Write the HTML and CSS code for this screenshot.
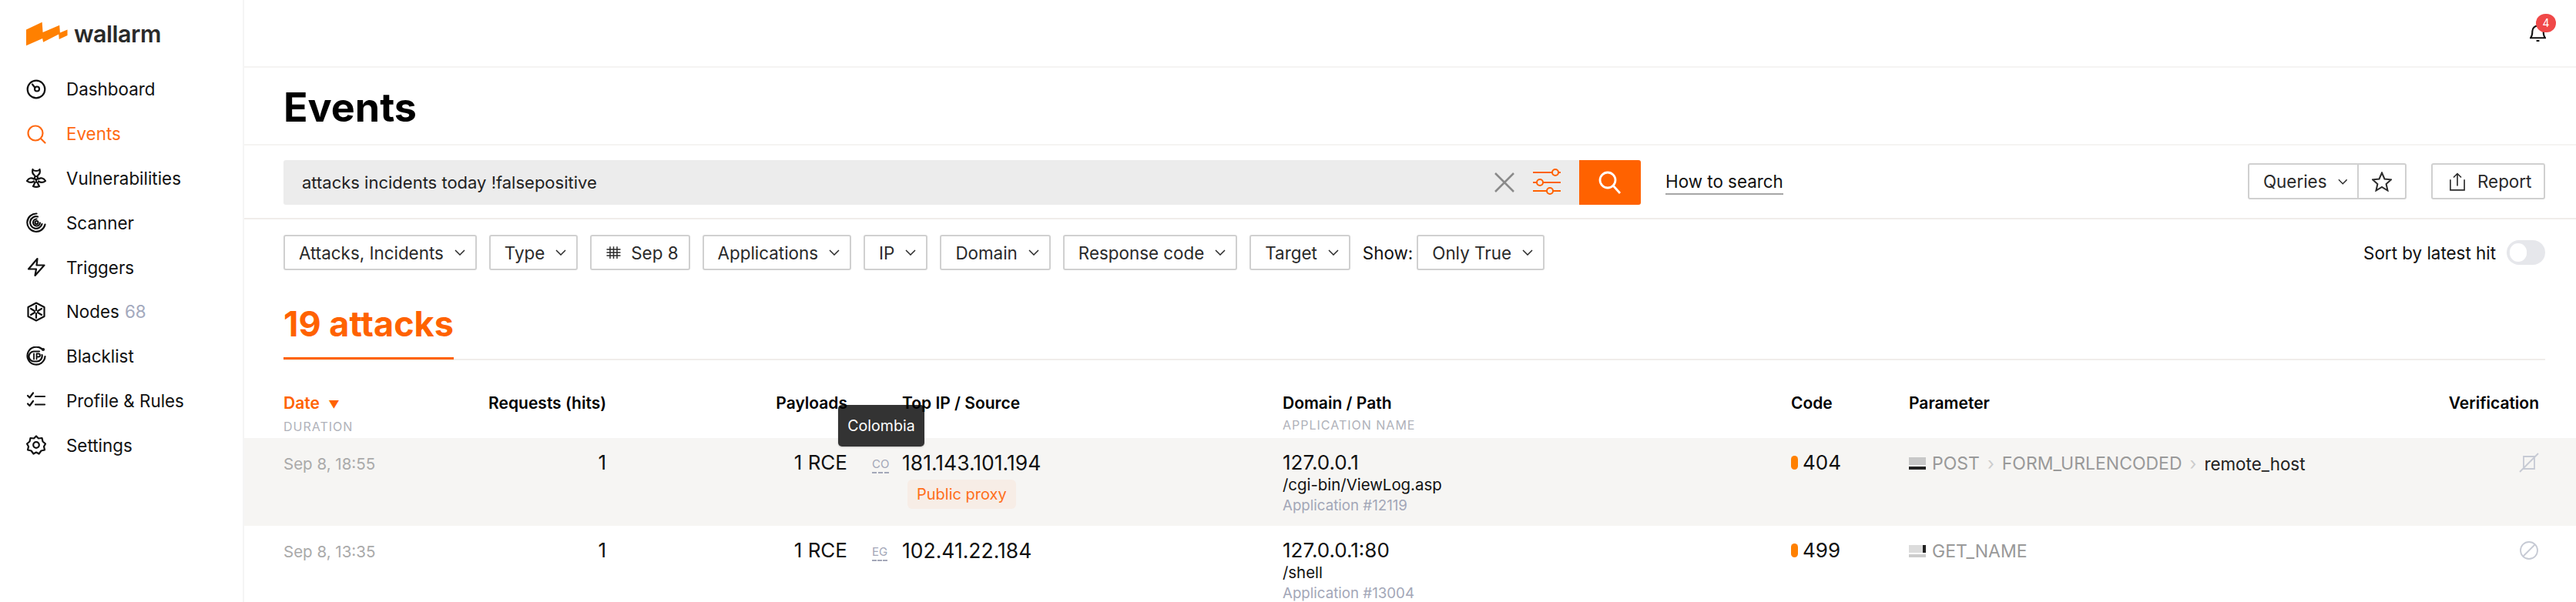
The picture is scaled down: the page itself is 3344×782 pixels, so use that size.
FILE: index.html
```html
<!DOCTYPE html>
<html lang="en">
<head>
  <meta charset="UTF-8">
  <meta name="viewport" content="width=device-width, initial-scale=1.0">
  <title>Wallarm - Events</title>
  <link rel="stylesheet" href="styles.css">
</head>
<body>
<div class="app">
  <aside class="sidebar">
    <div class="logo">
      <svg class="logo-mark" viewBox="0 0 56 32"><path d="M0 10.500 21 0.500 22 14 44 4.500 44.700 14.500 54.500 10.500 54.500 18 43.500 23 43 16.500 22.500 27 21.500 22 0 31.500Z" fill="#ff8000"/></svg>
      <span class="logo-text">wallarm</span>
    </div>
    <nav class="nav">
      <a class="nav-item">
        <svg class="nav-icon" viewBox="0 0 26 26"><circle cx="13" cy="13" r="11.300"/><circle cx="14" cy="12.500" r="3"/><path d="M11.500 11 8 6.500"/></svg>
        <span>Dashboard</span>
      </a>
      <a class="nav-item active">
        <svg class="nav-icon" viewBox="0 0 26 26"><circle cx="12" cy="12" r="9.500"/><path d="M19 19 24.500 24.500"/></svg>
        <span>Events</span>
      </a>
      <a class="nav-item">
        <svg class="nav-icon" viewBox="0 0 26 26"><circle cx="13" cy="13" r="2"/><path d="M8.500 2C7.500 5 8.500 8 11 10M17.500 2C18.500 5 17.500 8 15 10M8.500 2.500C10.500 4.500 15.500 4.500 17.500 2.500"/><path d="M1 17C3.500 13 7 12.500 10 14.500M25 17C22.500 13 19 12.500 16 14.500M1 17C4 19.500 7 19.500 10 17.500M25 17C22 19.500 19 19.500 16 17.500M13 16V19M9 24C11.500 25 14.500 25 17 24M9 24C10 22 11 21 11 19M17 24C16 22 15 21 15 19"/></svg>
        <span>Vulnerabilities</span>
      </a>
      <a class="nav-item">
        <svg class="nav-icon" viewBox="0 0 26 26"><circle cx="13.500" cy="13" r="2"/><path d="M24.500 15.500A11.700 11.700 0 1 1 13.500 1.500M20.500 15A7.800 7.800 0 1 1 15 5.500M18 13.500A4.500 4.500 0 1 1 13.500 8.500"/></svg>
        <span>Scanner</span>
      </a>
      <a class="nav-item">
        <svg class="nav-icon" viewBox="0 0 26 26"><path d="M14.500 2 3 15.500H13L11.500 24 23.500 10.500H13.500Z"/></svg>
        <span>Triggers</span>
      </a>
      <a class="nav-item">
        <svg class="nav-icon" viewBox="0 0 26 26"><path d="M13 1.500 23.500 7V19L13 24.500 2.500 19V7ZM13 5V11M13 15V21M6 9 11 12M15 14 20 17M20 9 15 12M11 14 6 17"/></svg>
        <span>Nodes</span><span class="nav-count">68</span>
      </a>
      <a class="nav-item">
        <svg class="nav-icon" viewBox="0 0 26 26"><path d="M20 3A11.500 11.500 0 1 0 24.500 13M17 6.500H10A6.500 6.500 0 0 0 10 19.500H14A7 7 0 0 0 20.500 11"/><path class="thin" d="M10 9.500V16.500M13.500 16.500V9.500H16A2 2 0 0 1 16 13.500H13.500"/><circle class="thin" cx="22" cy="4" r="1.200"/></svg>
        <span>Blacklist</span>
      </a>
      <a class="nav-item">
        <svg class="nav-icon" viewBox="0 0 26 26"><path d="M2 7 4.500 9.500 9 3.500M2 17.500 4.500 20 9 14M12 8H24M12 18.500H24"/></svg>
        <span>Profile &amp; Rules</span>
      </a>
      <a class="nav-item">
        <svg class="nav-icon" viewBox="0 0 26 26"><circle cx="13" cy="13" r="3.800"/><path d="M13 1.500 16 4.500 20.500 4 21.500 8.500 25 11.500 23 15 24 19.500 19.500 20.500 16.500 24.500 13 22.500 9.500 24.500 6.500 20.500 2 19.500 3 15 1 11.500 4.500 8.500 5.500 4 10 4.500Z"/></svg>
        <span>Settings</span>
      </a>
    </nav>
  </aside>

  <main class="main">
    <header class="topbar">
      <div class="bell">
        <svg class="bell-icon" viewBox="0 0 22 26"><path d="M1 19.500H21C18.500 17 18.500 14 18.500 10.500A7.500 7.500 0 0 0 3.500 10.500C3.500 14 3.500 17 1 19.500ZM9 23.500H13"/></svg>
        <span class="badge">4</span>
      </div>
    </header>

    <div class="title-row">
      <h1>Events</h1>
    </div>

    <div class="search-row">
      <div class="search">
        <span class="search-text">attacks incidents today !falsepositive</span>
        <svg class="search-clear" viewBox="0 0 26 26"><path d="M1 1 25 25M25 1 1 25"/></svg>
        <svg class="search-tune" viewBox="0 0 36 36"><path d="M0 5H25M33 5H36M0 18H5M13 18H36M0 29H18M26 29H36"/><circle cx="29" cy="5" r="4"/><circle cx="9" cy="18" r="4"/><circle cx="22" cy="29" r="4"/></svg>
        <button class="search-btn">
          <svg viewBox="0 0 30 30"><circle cx="12" cy="12" r="10"/><path d="M19 19 28 29"/></svg>
        </button>
      </div>
      <a class="how-to">How to search</a>
      <div class="search-actions">
        <div class="btn-group">
          <button class="btn queries">Queries <svg class="chev" viewBox="0 0 14 8"><path d="M1 1 7 7 13 1"/></svg></button>
          <button class="btn star">
            <svg viewBox="0 0 26 26"><path d="M13 1.500 16.500 9.500 25 10.300 18.600 16 20.500 24.500 13 20 5.500 24.500 7.400 16 1 10.300 9.500 9.500Z"/></svg>
          </button>
        </div>
        <button class="btn report">
          <svg viewBox="0 0 22 26"><path d="M1 10V25H21V10M11 19V2M5.500 7 11 1.500 16.500 7"/></svg>
          Report
        </button>
      </div>
    </div>

    <div class="filters">
      <button class="btn filter">Attacks, Incidents <svg class="chev" viewBox="0 0 14 8"><path d="M1 1 7 7 13 1"/></svg></button>
      <button class="btn filter">Type <svg class="chev" viewBox="0 0 14 8"><path d="M1 1 7 7 13 1"/></svg></button>
      <button class="btn filter">
        <svg class="cal" viewBox="0 0 18 16"><path d="M1 4.500H17M1 8H17M1 11.500H17M5 1V15M9 1V15M13 1V15"/></svg>
        Sep 8
      </button>
      <button class="btn filter">Applications <svg class="chev" viewBox="0 0 14 8"><path d="M1 1 7 7 13 1"/></svg></button>
      <button class="btn filter">IP <svg class="chev" viewBox="0 0 14 8"><path d="M1 1 7 7 13 1"/></svg></button>
      <button class="btn filter">Domain <svg class="chev" viewBox="0 0 14 8"><path d="M1 1 7 7 13 1"/></svg></button>
      <button class="btn filter">Response code <svg class="chev" viewBox="0 0 14 8"><path d="M1 1 7 7 13 1"/></svg></button>
      <button class="btn filter">Target <svg class="chev" viewBox="0 0 14 8"><path d="M1 1 7 7 13 1"/></svg></button>
      <div class="show">
        <span>Show:</span>
        <button class="btn filter">Only True <svg class="chev" viewBox="0 0 14 8"><path d="M1 1 7 7 13 1"/></svg></button>
      </div>
      <div class="sort">
        <span>Sort by latest hit</span>
        <span class="toggle"><span class="toggle-knob"></span></span>
      </div>
    </div>

    <div class="tabs">
      <div class="tab">19 attacks</div>
    </div>

    <div class="table">
      <div class="row head">
        <div>
          <div class="th sorted">Date <span class="sort-arrow">▼</span></div>
          <div class="th-sub">DURATION</div>
        </div>
        <div class="th right">Requests (hits)</div>
        <div class="th right">Payloads</div>
        <div></div>
        <div class="th">Top IP / Source</div>
        <div>
          <div class="th">Domain / Path</div>
          <div class="th-sub">APPLICATION NAME</div>
        </div>
        <div class="th">Code</div>
        <div class="th">Parameter</div>
        <div class="th right">Verification</div>
      </div>

      <div class="row event hovered">
        <div class="date">Sep 8, 18:55</div>
        <div class="num">1</div>
        <div class="num">1 RCE</div>
        <div class="flag">
          <span class="country">CO</span>
          <div class="tooltip">Colombia</div>
        </div>
        <div>
          <div class="ip">181.143.101.194</div>
          <span class="tag">Public proxy</span>
        </div>
        <div>
          <div class="domain">127.0.0.1</div>
          <div class="path">/cgi-bin/ViewLog.asp</div>
          <div class="app-name">Application #12119</div>
        </div>
        <div class="code"><span class="code-dot"></span>404</div>
        <div class="param">
          <span class="sig"><i class="sig-a"></i><i class="sig-b"></i></span>
          <span>POST</span><span class="sep">›</span><span>FORM_URLENCODED</span><span class="sep">›</span><span class="param-name">remote_host</span>
        </div>
        <div class="verify">
          <svg viewBox="0 0 26 26"><path d="M6 5H20V21H6ZM25 1 1 25"/></svg>
        </div>
      </div>

      <div class="row event">
        <div class="date">Sep 8, 13:35</div>
        <div class="num">1</div>
        <div class="num">1 RCE</div>
        <div class="flag"><span class="country">EG</span></div>
        <div>
          <div class="ip">102.41.22.184</div>
        </div>
        <div>
          <div class="domain">127.0.0.1:80</div>
          <div class="path">/shell</div>
          <div class="app-name">Application #13004</div>
        </div>
        <div class="code"><span class="code-dot"></span>499</div>
        <div class="param">
          <span class="sig sig-get"><i class="sig-c"></i><i class="sig-d"></i></span>
          <span>GET_NAME</span>
        </div>
        <div class="verify">
          <svg viewBox="0 0 26 26"><circle cx="13" cy="13" r="11"/><path d="M5 21 21 5"/></svg>
        </div>
      </div>
    </div>
  </main>
</div>
</body>
</html>
```

FILE: styles.css
```css
* {
  box-sizing: border-box;
}

html, body {
  margin: 0;
  height: 782px;
  overflow: hidden;
  background: #fff;
}

body {
  font-family: Inter, "Liberation Sans", sans-serif;
  font-size: 22.4px;
  color: #111;
}

svg {
  fill: none;
  stroke: currentColor;
  display: block;
}

.app {
  display: flex;
  height: 782px;
}

/* sidebar */
.sidebar {
  width: 317px;
  flex-shrink: 0;
  border-right: 2px solid #f5f5f5;
}

.logo {
  height: 87px;
  display: flex;
  align-items: center;
  padding: 0 0 0 34px;
  gap: 7px;
}

.logo-mark {
  width: 55px;
  height: 32px;
  stroke: none;
}

.logo-text {
  font-size: 30.500px;
  font-weight: 600;
  color: #2a2a2a;
  letter-spacing: -0.5px;
}

.nav-item {
  height: 57.800px;
  display: flex;
  align-items: center;
  padding-left: 34px;
  color: #111;
}

.nav-item.active {
  color: #ff6a13;
}

.nav-icon {
  width: 26px;
  height: 26px;
  margin-right: 26px;
  stroke-width: 2.200;
  stroke-linecap: round;
  stroke-linejoin: round;
}

.nav-icon .thin {
  stroke-width: 1.800;
}

.nav-count {
  color: #a3a9bd;
  margin-left: 7px;
}

/* top */
.main {
  flex: 1;
  min-width: 0;
}

.topbar {
  height: 88px;
  border-bottom: 2px solid #f5f4f2;
  display: flex;
  justify-content: flex-end;
  padding: 18px 26px 0 0;
}

.bell {
  position: relative;
  width: 26px;
  height: 42px;
}

.bell-icon {
  width: 21px;
  height: 26px;
  margin: 12px 0 0 -8px;
  stroke-width: 2.200;
  color: #111;
}

.badge {
  position: absolute;
  top: 0;
  left: 0;
  width: 26px;
  height: 24px;
  border-radius: 13px;
  background: #f04848;
  color: #fff;
  font-size: 14px;
  line-height: 24px;
  text-align: center;
}

.title-row {
  height: 101px;
  padding: 22px 0 0 51px;
  border-bottom: 2px solid #f5f4f2;
}

h1 {
  margin: 0;
  font-size: 52px;
  line-height: 60px;
  font-weight: 700;
  color: #000;
}

.search-row {
  height: 96px;
  display: flex;
  align-items: flex-start;
  padding: 19px 40px 0 51px;
  border-bottom: 2px solid #f0edea;
}

.search {
  width: 1762px;
  height: 58px;
  background: #ececec;
  border-radius: 3px;
  display: flex;
  align-items: center;
  padding-left: 24px;
  overflow: hidden;
}

.search-text {
  flex: 1;
  font-size: 22px;
  color: #222;
}

.search-clear {
  width: 26px;
  height: 26px;
  color: #8a8a8a;
  stroke-width: 2.500;
  margin-right: 24px;
}

.search-tune {
  width: 36px;
  height: 36px;
  color: #ff6200;
  stroke-width: 2;
  margin-right: 24px;
}

.search-btn {
  width: 80px;
  height: 58px;
  border: 0;
  padding: 0;
  background: #ff6200;
  color: #fff;
  display: flex;
  align-items: center;
  justify-content: center;
}

.search-btn svg {
  width: 30px;
  height: 30px;
  stroke-width: 2.800;
}

.how-to {
  margin: 14px 0 0 32px;
  line-height: 28px;
  padding-bottom: 1px;
  border-bottom: 2px solid #a6a6a6;
}

.search-actions {
  margin-left: auto;
  display: flex;
  gap: 32px;
  padding-top: 4px;
}

.btn {
  height: 47px;
  padding: 0 13px 0 18px;
  border: 2px solid #d0d0d0;
  border-radius: 3px;
  background: #fff;
  font-family: inherit;
  font-size: 22.4px;
  color: #2a2a2a;
  display: inline-flex;
  align-items: center;
  white-space: nowrap;
}

.chev {
  width: 14px;
  height: 8px;
  margin-left: 14px;
  stroke-width: 1.500;
}

.btn-group {
  display: flex;
}

.queries {
  width: 143px;
  padding-left: 18px;
  border-radius: 3px 0 0 3px;
  border-right-width: 1px;
}

.star {
  width: 63px;
  padding: 0;
  justify-content: center;
  border-radius: 0 3px 3px 0;
  border-left-width: 1px;
}

.star svg {
  width: 26px;
  height: 26px;
  stroke-width: 2;
}

.report {
  width: 148px;
  padding-left: 22px;
  gap: 16px;
}

.report svg {
  width: 20px;
  height: 26px;
  stroke-width: 1.800;
}

/* filters */
.filters {
  height: 70px;
  padding: 20px 40px 0 51px;
  display: flex;
  align-items: flex-start;
  gap: 16px;
}

.filter {
  height: 46px;
}

.cal {
  width: 21px;
  height: 18px;
  margin-right: 12px;
  stroke-width: 1.300;
}

.show {
  display: flex;
  align-items: center;
  gap: 5px;
  height: 46px;
}

.sort {
  margin-left: auto;
  height: 46px;
  display: flex;
  align-items: center;
  gap: 14px;
}

.toggle {
  width: 50px;
  height: 32px;
  border-radius: 16px;
  background: #e6e7eb;
  padding: 4px;
}

.toggle-knob {
  display: block;
  width: 22px;
  height: 24px;
  border-radius: 12px;
  background: #fff;
}

/* tabs */
.tabs {
  margin: 0 40px 0 51px;
  height: 113px;
  padding-top: 38px;
  border-bottom: 2px solid #f0edea;
}

.tab {
  display: inline-block;
  height: 74px;
  font-size: 45px;
  line-height: 56px;
  font-weight: 700;
  color: #ff6200;
  border-bottom: 3px solid #ff6200;
}

/* table */
.table {
  padding-top: 43px;
}

.row {
  display: grid;
  grid-template-columns: 219px 200px 313px 71px 494px 660px 153px 1fr 200px;
  padding: 0 48px 0 51px;
}

.head {
  height: 58px;
  position: relative;
  z-index: 1;
}

.th {
  font-weight: 600;
  font-size: 21px;
  line-height: 26px;
  color: #000;
}

.th.sorted {
  color: #ff6200;
}

.sort-arrow {
  font-size: 14px;
  margin-left: 6px;
}

.th-sub {
  margin-top: 6px;
  font-size: 16px;
  line-height: 18px;
  letter-spacing: 1px;
  color: #b0b2ba;
}

.right {
  text-align: right;
}

.event {
  height: 114px;
  padding-top: 17px;
}

.event.hovered {
  background: #f6f5f3;
}

.date {
  font-size: 20.500px;
  line-height: 34px;
  color: #aaa;
}

.num {
  text-align: right;
  font-size: 26px;
  line-height: 30px;
}

.flag {
  position: relative;
  padding-left: 32px;
}

.country {
  display: inline-block;
  font-size: 15px;
  line-height: 20px;
  margin-top: 7px;
  color: #a3a7b8;
  border-bottom: 2px dashed #a3a7b8;
}

.tooltip {
  position: absolute;
  top: -60px;
  left: -12px;
  width: 112px;
  height: 54px;
  border-radius: 5px;
  background: #333;
  color: #fff;
  font-size: 19.600px;
  line-height: 54px;
  text-align: center;
  box-shadow: 0 1px 2px rgba(0, 0, 0, 0.2);
}

.ip,
.domain,
.code {
  font-size: 26px;
  line-height: 30px;
}

.ip {
  font-size: 26.500px;
}

.domain {
  line-height: 29px;
}

.tag {
  display: inline-block;
  margin: 7px 0 0 7px;
  padding: 0 12px;
  height: 38px;
  line-height: 38px;
  border-radius: 6px;
  background: #f7ede6;
  color: #ff6f1a;
  font-size: 20px;
}

.path {
  font-size: 20.400px;
  line-height: 30px;
}

.app-name {
  font-size: 18.700px;
  line-height: 24px;
  color: #a3a7b8;
}

.code {
  display: flex;
  align-items: flex-start;
  gap: 6px;
}

.code-dot {
  width: 9px;
  height: 18px;
  margin-top: 6px;
  border-radius: 5px;
  background: #ff8000;
}

.param {
  display: flex;
  align-items: center;
  height: 32px;
  font-size: 23px;
  color: #999;
  white-space: nowrap;
}

.param-name {
  color: #222;
  font-size: 22.400px;
}

.sep {
  color: #ccc;
  margin: 0 10px;
}

.sig {
  width: 22px;
  height: 16px;
  margin-right: 8px;
  display: flex;
  flex-direction: column;
  justify-content: space-between;
  flex-shrink: 0;
}

.sig i {
  display: block;
}

.sig-a {
  height: 10px;
  background: #c8c8c8;
}

.sig-b {
  height: 4px;
  background: #222;
}

.sig-c {
  height: 10px;
  background: linear-gradient(to left, #222 4px, #dcdcdc 4px);
}

.sig-d {
  height: 4px;
  background: #ccc;
}

.verify {
  display: flex;
  justify-content: flex-end;
  padding-top: 2px;
}

.verify svg {
  width: 26px;
  height: 26px;
  color: #c6cad4;
  stroke-width: 1.800;
}
```
